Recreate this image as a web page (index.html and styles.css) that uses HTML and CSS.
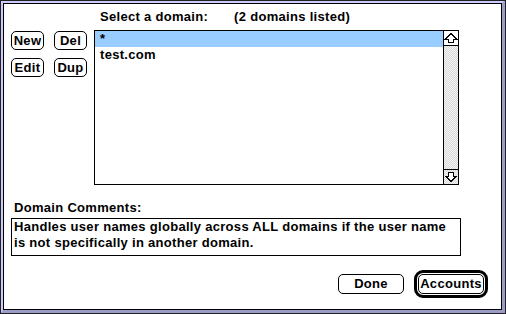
FILE: index.html
```html
<!DOCTYPE html>
<html lang="en">
<head>
  <meta charset="UTF-8">
  <title>Domains</title>
  <link rel="stylesheet" href="styles.css">
</head>
<body>

  <div class="window">
    <div class="frame">
      <div class="pane">

        <div class="top">
          <div class="tools">
            <button class="btn small">New</button>
            <button class="btn small">Del</button>
            <button class="btn small">Edit</button>
            <button class="btn small">Dup</button>
          </div>

          <div class="domains">
            <div class="caption">
              <span>Select a domain:</span>
              <span class="count">(2 domains listed)</span>
            </div>
            <div class="listbox">
              <ul class="items">
                <li class="selected">*</li>
                <li>test.com</li>
              </ul>
              <div class="scrollbar">
                <div class="arrow up">
                  <svg width="14" height="14" viewBox="0 0 14 14"><path d="M7 2.5 L12.5 8 L9.5 8 L9.5 11.5 L4.5 11.5 L4.5 8 L1.5 8 Z" fill="#fff" stroke="#000" stroke-width="1" shape-rendering="crispEdges"/></svg>
                </div>
                <div class="track"></div>
                <div class="arrow down">
                  <svg width="14" height="14" viewBox="0 0 14 14"><path d="M7 11.5 L12.5 6 L9.5 6 L9.5 2.5 L4.5 2.5 L4.5 6 L1.5 6 Z" fill="#fff" stroke="#000" stroke-width="1" shape-rendering="crispEdges"/></svg>
                </div>
              </div>
            </div>
          </div>
        </div>

        <div class="comments">
          <div class="label">Domain Comments:</div>
          <div class="comment-box">Handles user names globally across ALL domains if the user name is not specifically in another domain.</div>
        </div>

        <div class="actions">
          <button class="btn wide">Done</button>
          <div class="default-ring">
            <button class="btn wide">Accounts</button>
          </div>
        </div>

      </div>
    </div>
  </div>

</body>
</html>
```

FILE: styles.css
```css
* {
  box-sizing: border-box;
}

body {
  margin: 0;
  background: #fff;
  font-family: 'Liberation Sans', Arial, sans-serif;
  font-weight: bold;
  font-size: 13px;
  letter-spacing: 0.3px;
  color: #000;
}

.window {
  width: 506px;
  height: 314px;
  border: 1px solid #222;
}

.frame {
  height: 100%;
  border-style: solid;
  border-width: 2px 3px 3px 2px;
  border-color: #ccccff #9c9cc8 #9c9cc8 #ccccff;
}

.pane {
  height: 100%;
  border: 1px solid #000;
  background: #fff;
  padding: 0 13px 0 7px;
  display: flex;
  flex-direction: column;
}

.top {
  display: flex;
}

.tools {
  margin-top: 27px;
  display: grid;
  grid-template-columns: 33px 33px;
  grid-auto-rows: 19px;
  column-gap: 10px;
  row-gap: 8px;
  align-content: start;
}

.btn {
  font: inherit;
  letter-spacing: inherit;
  color: #000;
  background: #fff;
  border: 1px solid #000;
  border-radius: 5px;
  padding: 0;
  line-height: 16px;
}

.domains {
  margin-left: 7px;
}

.caption {
  height: 26px;
  padding: 5px 0 0 6px;
  line-height: 16px;
  display: flex;
}

.count {
  margin-left: 26px;
}

.listbox {
  width: 365px;
  height: 155px;
  border: 1px solid #000;
  display: flex;
}

.items {
  flex: 1;
  margin: 0;
  padding: 0;
  list-style: none;
}

.items li {
  height: 16px;
  line-height: 16px;
  padding-left: 5px;
}

.items .selected {
  background: #99ccff;
}

.scrollbar {
  width: 15px;
  border-left: 1px solid #000;
  display: flex;
  flex-direction: column;
}

.arrow {
  height: 15px;
  display: flex;
  align-items: center;
  justify-content: center;
}

.arrow.up {
  background: #fff;
  border-bottom: 1px solid #000;
}

.arrow.down {
  border-top: 1px solid #000;
  background: repeating-conic-gradient(#d6d6d6 0 25%, #f6f6f6 0 50%) 0 0 / 2px 2px;
}

.track {
  flex: 1;
  background: repeating-conic-gradient(#d6d6d6 0 25%, #f6f6f6 0 50%) 0 0 / 2px 2px;
}

.comments {
  margin-top: 15px;
}

.label {
  line-height: 16px;
  padding-left: 3px;
  margin-bottom: 2px;
}

.comment-box {
  width: 450px;
  height: 38px;
  border: 1px solid #000;
  padding: 0 10px 3px 2px;
  line-height: 16px;
}

.actions {
  margin-top: 14px;
  display: flex;
  justify-content: flex-end;
  align-items: center;
  gap: 10px;
}

.wide {
  width: 66px;
  height: 20px;
}

.default-ring {
  border: 3px solid #000;
  border-radius: 9px;
  padding: 1px;
  display: flex;
}
```
